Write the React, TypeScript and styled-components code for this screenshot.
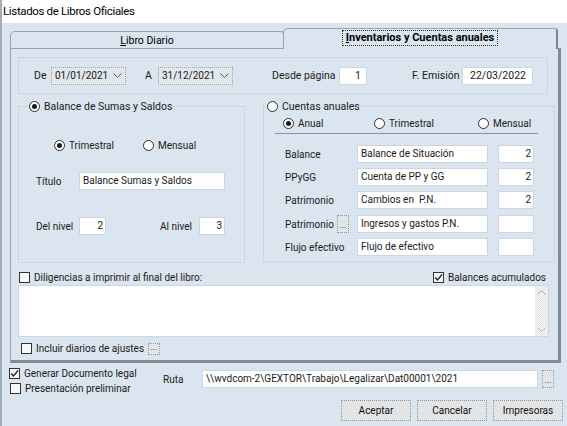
import React from "react";
import styled, { createGlobalStyle } from "styled-components";

const GlobalStyle = createGlobalStyle`
  body { margin: 0; background: #dae5f0; }
  * { box-sizing: border-box; }
`;

const Window = styled.div`
  width: 567px;
  height: 426px;
  overflow: hidden;
  background: #dae5f0;
  border-left: 2px solid #a3adb8;
  font-family: Roboto, "Liberation Sans", sans-serif;
  font-size: 10px;
  color: #1a1a1a;
  display: flex;
  flex-direction: column;
`;

const TitleBar = styled.div`
  height: 23px;
  flex-shrink: 0;
  background: #fff;
  padding-left: 1px;
  font-size: 11.5px;
  letter-spacing: -0.35px;
  line-height: 23px;
  color: #000;
`;

const TabStrip = styled.div`
  display: flex;
  align-items: flex-end;
  height: 20px;
  margin: 5px 0 0 8px;
  position: relative;
  z-index: 1;
`;

const Tab = styled.div<{ $active?: boolean }>`
  width: ${(p) => (p.$active ? 275 : 274)}px;
  height: ${(p) => (p.$active ? 21 : 17)}px;
  margin-left: ${(p) => (p.$active ? -1 : 0)}px;
  margin-bottom: ${(p) => (p.$active ? -1 : 0)}px;
  background: #dae5f0;
  border: 1px solid #98a3ae;
  border-bottom: none;
  border-right: ${(p) => (p.$active ? "2px solid #7b858f" : "1px solid #98a3ae")};
  border-top-left-radius: 5px;
  border-top-right-radius: 3px;
  display: flex;
  align-items: center;
  justify-content: center;
  padding-bottom: ${(p) => (p.$active ? 2 : 0)}px;
  font-size: ${(p) => (p.$active ? 11 : 10.5)}px;
  font-weight: ${(p) => (p.$active ? 700 : 400)};
  color: #000;
`;

const FocusRect = styled.span`
  border: 1px dotted #333;
  padding: 1px 3px;
  line-height: 12px;
`;

const Panel = styled.div`
  margin-left: 8px;
  width: 551px;
  height: 315px;
  flex-shrink: 0;
  border-top: 1px solid #98a3ae;
  border-left: 1px solid #98a3ae;
  border-right: 3px solid #818b95;
  border-bottom: 3px solid #818b95;
  padding: 8px 0 0 7px;
  display: flex;
  flex-direction: column;
`;

const DateGroup = styled.div`
  width: 530px;
  height: 37px;
  flex-shrink: 0;
  border: 1px dotted #bcc7d2;
  display: flex;
  align-items: center;
  padding: 0 0 0 15px;
  font-size: 10.5px;
`;

const Label = styled.span<{ $w?: number; $ml?: number }>`
  display: inline-block;
  flex-shrink: 0;
  white-space: nowrap;
  width: ${(p) => (p.$w ? `${p.$w}px` : "auto")};
  margin-left: ${(p) => p.$ml ?? 0}px;
`;

const Combo = styled.div<{ $ml?: number }>`
  width: 75px;
  height: 18px;
  flex-shrink: 0;
  margin-left: ${(p) => p.$ml ?? 0}px;
  background: #e2e7ec;
  border: 1px dotted #98a2ac;
  display: flex;
  align-items: center;
  justify-content: space-between;
  padding: 0 3px 0 3px;
  font-size: 10px;
`;

const Field = styled.div<{ $w: number; $ml?: number; $align?: "left" | "right" | "center"; $pr?: number }>`
  width: ${(p) => p.$w}px;
  height: 18px;
  flex-shrink: 0;
  margin-left: ${(p) => p.$ml ?? 0}px;
  background: #fff;
  border: 1px solid #c9d6e3;
  line-height: 16px;
  padding: 0 ${(p) => p.$pr ?? 2}px 0 3px;
  text-align: ${(p) => p.$align ?? "left"};
  white-space: pre;
  overflow: hidden;
`;

const GroupsRow = styled.div`
  display: flex;
  align-items: flex-start;
  margin-top: 12px;
  flex-shrink: 0;
`;

const Group = styled.div<{ $w: number; $h: number; $ml?: number }>`
  width: ${(p) => p.$w}px;
  height: ${(p) => p.$h}px;
  margin-left: ${(p) => p.$ml ?? 0}px;
  border: 1px dotted #bcc7d2;
  display: flex;
  flex-direction: column;
`;

const Legend = styled.div<{ $ml: number }>`
  display: flex;
  align-items: center;
  align-self: flex-start;
  height: 13px;
  margin: -7px 0 0 ${(p) => p.$ml}px;
  padding: 0 2px 0 1px;
  background: #dae5f0;
  gap: 4px;
  font-size: 10.5px;
`;

const Row = styled.div<{ $mt?: number; $pl?: number; $h?: number }>`
  display: flex;
  align-items: center;
  flex-shrink: 0;
  margin-top: ${(p) => p.$mt ?? 0}px;
  padding-left: ${(p) => p.$pl ?? 0}px;
  height: ${(p) => p.$h ?? 18}px;
`;

const Option = styled.span<{ $w?: number }>`
  display: inline-flex;
  align-items: center;
  gap: 4px;
  flex-shrink: 0;
  white-space: nowrap;
  width: ${(p) => (p.$w ? `${p.$w}px` : "auto")};
`;

const RadioCircle = styled.span<{ $on?: boolean }>`
  width: 11px;
  height: 11px;
  flex-shrink: 0;
  border-radius: 50%;
  border: 1px solid #2b2b2b;
  background: #fff;
  display: inline-flex;
  align-items: center;
  justify-content: center;
  &::after {
    content: "";
    width: 5px;
    height: 5px;
    border-radius: 50%;
    background: ${(p) => (p.$on ? "#1a1a1a" : "transparent")};
  }
`;

const CheckBox = styled.span`
  width: 11px;
  height: 11px;
  flex-shrink: 0;
  border: 1px solid #333;
  background: #f6f8fa;
  display: inline-flex;
  align-items: center;
  justify-content: center;
`;

const Separator = styled.div`
  margin: 3px 0 0 11px;
  width: 263px;
  height: 1px;
  background: #8c959e;
  flex-shrink: 0;
`;

const FieldList = styled.div`
  display: flex;
  flex-direction: column;
  gap: 5px;
  margin-top: 11px;
`;

const DotsButton = styled.div<{ $h?: number; $ml?: number }>`
  width: 12px;
  height: ${(p) => p.$h ?? 12}px;
  flex-shrink: 0;
  margin-left: ${(p) => p.$ml ?? 0}px;
  background: #e3e6e9;
  border: 1px dotted #8e979f;
  font-size: 9px;
  line-height: 1;
  display: flex;
  align-items: flex-end;
  justify-content: center;
  padding-bottom: 2px;
`;

const MemoBox = styled.div`
  margin-top: 1px;
  width: 531px;
  height: 52px;
  flex-shrink: 0;
  background: #fff;
  border: 1px solid #c9d6e3;
  display: flex;
  justify-content: flex-end;
`;

const ScrollTrack = styled.div`
  width: 13px;
  height: 100%;
  background-image: repeating-conic-gradient(#e3e3e3 0 25%, #f7f7f7 0 50%);
  background-size: 2px 2px;
  display: flex;
  flex-direction: column;
  justify-content: space-between;
  align-items: center;
  padding: 4px 0;
`;

const BottomArea = styled.div`
  display: flex;
  align-items: flex-start;
  height: 37px;
  flex-shrink: 0;
  padding-left: 7px;
`;

const ChecksCol = styled.div`
  width: 154px;
  padding-top: 4px;
  display: flex;
  flex-direction: column;
  gap: 2px;
`;

const ButtonRow = styled.div`
  display: flex;
  justify-content: flex-end;
  gap: 6px;
  padding-right: 4px;
`;

const Button = styled.div`
  width: 70px;
  height: 21px;
  background: #e2e4e6;
  border: 1px dotted #8d959d;
  display: flex;
  align-items: center;
  justify-content: center;
  color: #111;
`;

const Chevron = ({ up, color = "#555" }: { up?: boolean; color?: string }) => (
  <svg width="9" height="5" viewBox="0 0 9 5">
    <polyline
      points={up ? "0.5,4.5 4.5,0.5 8.5,4.5" : "0.5,0.5 4.5,4.5 8.5,0.5"}
      fill="none"
      stroke={color}
      strokeWidth="1"
    />
  </svg>
);

const Check = ({ on }: { on?: boolean }) => (
  <CheckBox>
    {on && (
      <svg width="9" height="9" viewBox="0 0 9 9">
        <polyline points="1,4.5 3.5,7 8,1.5" fill="none" stroke="#222" strokeWidth="1.2" />
      </svg>
    )}
  </CheckBox>
);

const Radio = ({ on, label, w }: { on?: boolean; label: string; w?: number }) => (
  <Option $w={w}>
    <RadioCircle $on={on} />
    {label}
  </Option>
);

const cuentas = [
  { label: "Balance", value: "Balance de Situación", num: "2" },
  { label: "PPyGG", value: "Cuenta de PP y GG", num: "2" },
  { label: "Patrimonio", value: "Cambios en  P.N.", num: "2" },
  { label: "Patrimonio", value: "Ingresos y gastos P.N.", num: "", dots: true },
  { label: "Flujo efectivo", value: "Flujo de efectivo", num: "" },
];

export default function App() {
  return (
    <Window>
      <GlobalStyle />
      <TitleBar>Listados de Libros Oficiales</TitleBar>

      <TabStrip>
        <Tab>
          <span>
            <u>L</u>ibro Diario
          </span>
        </Tab>
        <Tab $active>
          <FocusRect>
            <u>I</u>nventarios y Cuentas anuales
          </FocusRect>
        </Tab>
      </TabStrip>

      <Panel>
        <DateGroup>
          <Label $w={17}>De</Label>
          <Combo>
            01/01/2021
            <Chevron />
          </Combo>
          <Label $w={13} $ml={19}>A</Label>
          <Combo>
            31/12/2021
            <Chevron />
          </Combo>
          <Label $w={67} $ml={39}>Desde página</Label>
          <Field $w={28} $align="right" $pr={5}>1</Field>
          <Label $w={50} $ml={45}>F. Emisión</Label>
          <Field $w={71} $align="center">22/03/2022</Field>
        </DateGroup>

        <GroupsRow>
          <Group $w={227} $h={157}>
            <Legend $ml={9}>
              <RadioCircle $on />
              Balance de Sumas y Saldos
            </Legend>
            <Row $mt={26} $pl={35} $h={13}>
              <Radio on label="Trimestral" w={89} />
              <Radio label="Mensual" />
            </Row>
            <Row $mt={20} $pl={17}>
              <Label $w={43}>Título</Label>
              <Field $w={146}>Balance Sumas y Saldos</Field>
            </Row>
            <Row $mt={27} $pl={17}>
              <Label $w={43}>Del nivel</Label>
              <Field $w={27} $align="right">2</Field>
              <Label $w={39} $ml={54}>Al nivel</Label>
              <Field $w={26} $align="right">3</Field>
            </Row>
          </Group>

          <Group $w={292} $h={156} $ml={18}>
            <Legend $ml={2}>
              <RadioCircle />
              Cuentas anuales
            </Legend>
            <Row $mt={4} $pl={19} $h={13}>
              <Radio on label="Anual" w={91} />
              <Radio label="Trimestral" w={104} />
              <Radio label="Mensual" />
            </Row>
            <Separator />
            <FieldList>
              {cuentas.map((c, i) => (
                <Row key={i} $pl={21} $mt={i === 3 ? 1 : 0}>
                  {c.dots ? (
                    <>
                      <Label $w={52}>{c.label}</Label>
                      <DotsButton $h={18}>...</DotsButton>
                      <Field $w={131} $ml={8}>{c.value}</Field>
                    </>
                  ) : (
                    <>
                      <Label $w={72}>{c.label}</Label>
                      <Field $w={131}>{c.value}</Field>
                    </>
                  )}
                  <Field $w={36} $ml={10} $align="right">{c.num}</Field>
                </Row>
              ))}
            </FieldList>
          </Group>
        </GroupsRow>

        <Row $mt={8} $pl={1} $h={13} style={{ width: 531 }}>
          <Option>
            <Check />
            Diligencias a imprimir al final del libro:
          </Option>
          <Option style={{ marginLeft: "auto", paddingRight: 3 }}>
            <Check on />
            Balances acumulados
          </Option>
        </Row>
        <MemoBox>
          <ScrollTrack>
            <Chevron up color="#b0b0b0" />
            <Chevron color="#b0b0b0" />
          </ScrollTrack>
        </MemoBox>
        <Row $mt={5} $pl={3} $h={13}>
          <Option>
            <Check />
            Incluir diarios de ajustes
          </Option>
          <DotsButton $ml={4}>...</DotsButton>
        </Row>
      </Panel>

      <BottomArea>
        <ChecksCol>
          <Row $h={13}>
            <Option>
              <Check on />
              Generar Documento legal
            </Option>
          </Row>
          <Row $h={13} $pl={1}>
            <Option>
              <Check />
              Presentación preliminar
            </Option>
          </Row>
        </ChecksCol>
        <Row $mt={7}>
          <Label $w={39}>Ruta</Label>
          <Field $w={336}>{"\\\\wvdcom-2\\GEXTOR\\Trabajo\\Legalizar\\Dat00001\\2021"}</Field>
          <DotsButton $h={18} $ml={4}>...</DotsButton>
        </Row>
      </BottomArea>

      <ButtonRow>
        <Button>Aceptar</Button>
        <Button>Cancelar</Button>
        <Button>Impresoras</Button>
      </ButtonRow>
    </Window>
  );
}
